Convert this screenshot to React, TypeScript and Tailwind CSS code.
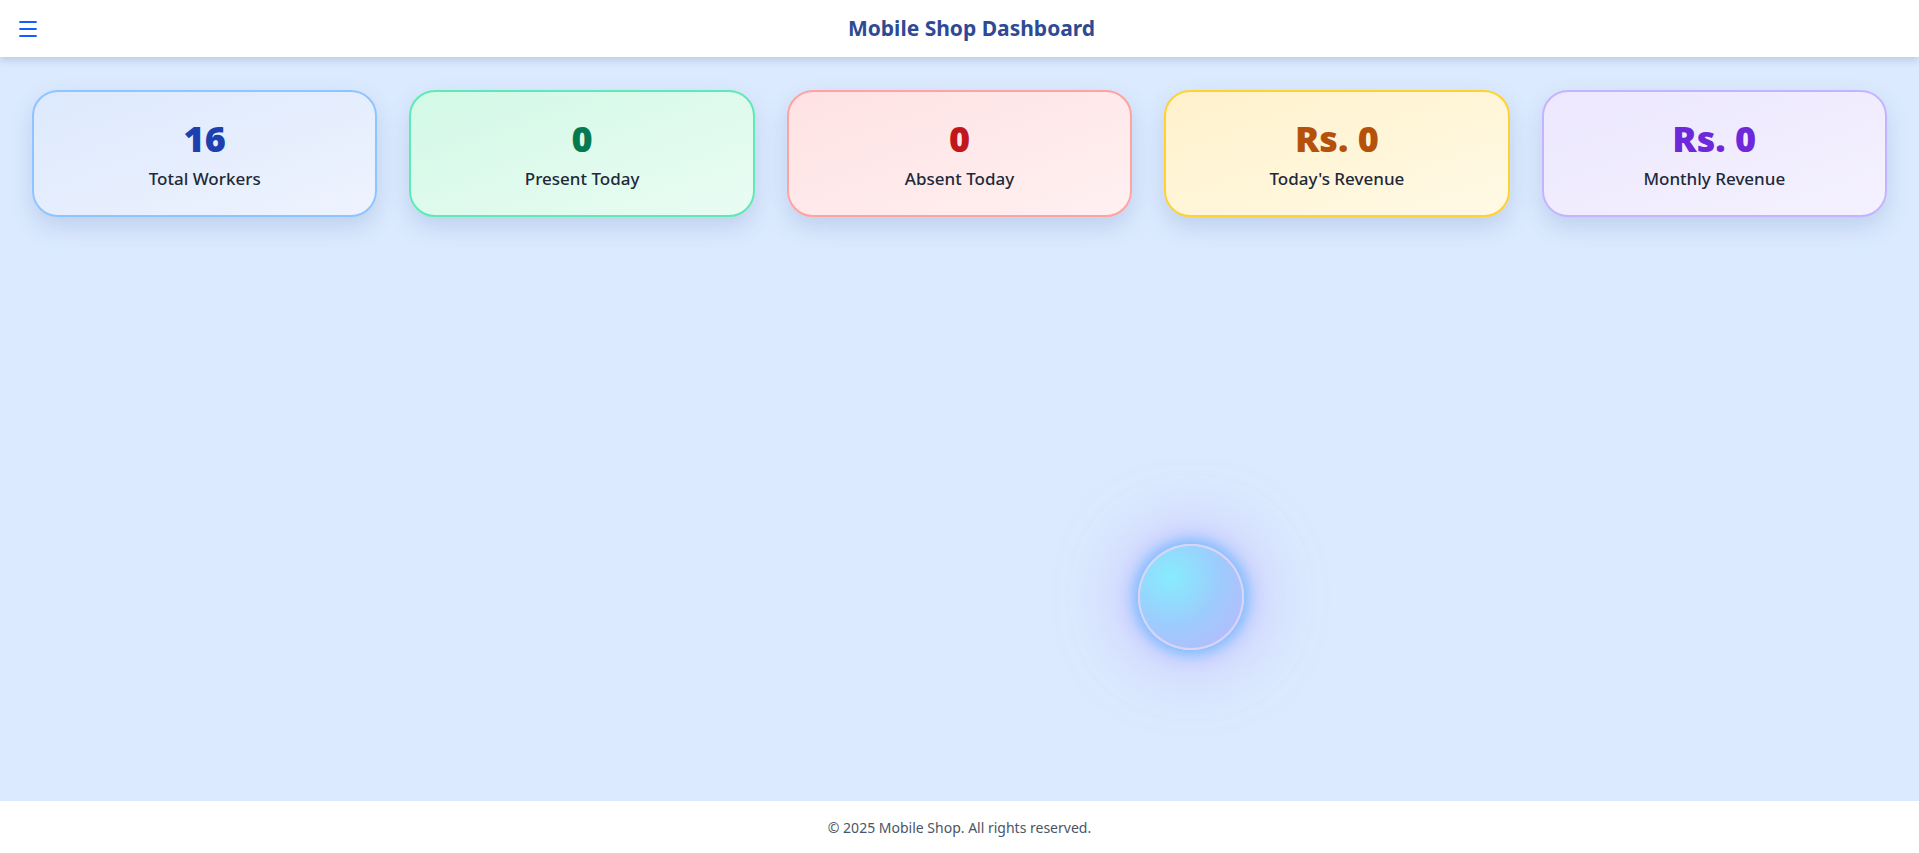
import { Menu } from "lucide-react";

type Stat = {
  value: string;
  label: string;
  card: string;
  text: string;
};

const stats: Stat[] = [
  {
    value: "16",
    label: "Total Workers",
    card: "border-blue-300 bg-gradient-to-br from-[#dde9fd] to-[#eef3fe]",
    text: "text-[#1e3fae]",
  },
  {
    value: "0",
    label: "Present Today",
    card: "border-emerald-300 bg-gradient-to-br from-[#d3f9e7] to-[#e9fcf3]",
    text: "text-[#047a52]",
  },
  {
    value: "0",
    label: "Absent Today",
    card: "border-red-300 bg-gradient-to-br from-[#ffe2e3] to-[#fff0f1]",
    text: "text-[#c0171c]",
  },
  {
    value: "Rs. 0",
    label: "Today's Revenue",
    card: "border-amber-300 bg-gradient-to-br from-[#fff1cb] to-[#fffae6]",
    text: "text-[#b5510a]",
  },
  {
    value: "Rs. 0",
    label: "Monthly Revenue",
    card: "border-violet-300 bg-gradient-to-br from-[#ede8fe] to-[#f4f1ff]",
    text: "text-[#6d28d9]",
  },
];

function StatCard({ stat }: { stat: Stat }) {
  return (
    <div
      className={`flex h-[127px] flex-col items-center justify-center rounded-[26px] border-2 shadow-[0_10px_22px_rgba(90,120,180,0.22)] ${stat.card}`}
    >
      <div className={`text-[36px] leading-none font-black ${stat.text}`}>
        {stat.value}
      </div>
      <div className="mt-[13px] text-[17px] leading-none font-medium text-gray-800">
        {stat.label}
      </div>
    </div>
  );
}

export default function App() {
  return (
    <div
      className="relative flex h-[853px] flex-col overflow-hidden bg-blue-100"
      style={{ fontFamily: '"Noto Sans", "Open Sans", sans-serif' }}
    >
      <header className="relative z-10 flex h-[57px] items-center bg-white px-4 shadow-[0_3px_8px_rgba(60,80,130,0.22)]">
        <button className="flex h-8 w-6 items-center justify-center text-blue-600">
          <Menu size={24} strokeWidth={1.8} />
        </button>
        <h1 className="flex-1 text-center text-[21px] font-bold text-[#2e4a94]">
          Mobile Shop Dashboard
        </h1>
      </header>

      <main className="relative flex-1 px-8 pt-[33px]">
        <div className="grid grid-cols-5 gap-8">
          {stats.map((s) => (
            <StatCard key={s.label} stat={s} />
          ))}
        </div>

        {/* floating orb */}
        <div className="absolute top-[487px] left-[1138px] h-[106px] w-[106px] rounded-full border-2 border-[#e7d6f5]/80 bg-[radial-gradient(circle_at_30%_30%,#86ecfd_0%,#9ecbfd_50%,#bcb6fc_100%)] shadow-[0_0_14px_5px_rgba(96,180,255,0.75),0_0_50px_18px_rgba(185,165,255,0.4),0_0_80px_10px_rgba(200,190,255,0.25)]" />
      </main>

      <footer className="flex h-[52px] items-center justify-center bg-white text-[14px] text-gray-600">
        © 2025 Mobile Shop. All rights reserved.
      </footer>
    </div>
  );
}
